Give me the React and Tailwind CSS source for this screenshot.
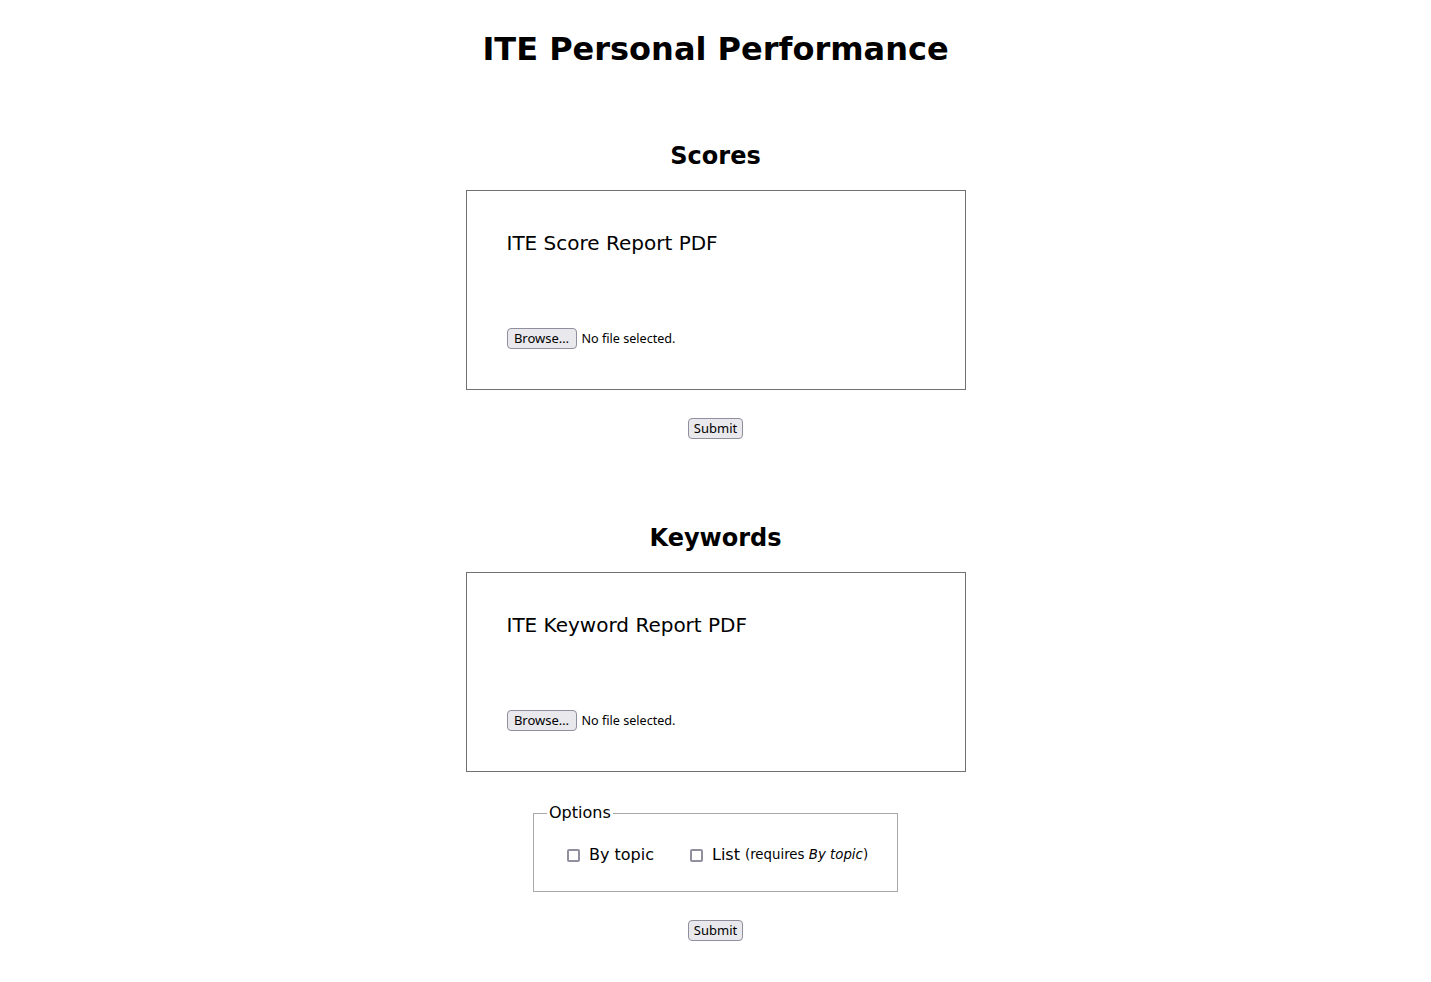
import * as React from "react";

function FileField() {
  return (
    <div className="flex items-center gap-[5px] font-['Noto_Sans',sans-serif] text-[13px] text-black">
      <button
        type="button"
        className="h-[21px] w-[70px] leading-[19px] bg-[#e9e9ed] border border-[#8f8f9d] rounded-[4px] text-center"
      >
        Browse…
      </button>
      <span className="text-[12.6px] leading-[21px]">No file selected.</span>
    </div>
  );
}

function UploadBox({ label }) {
  return (
    <div className="w-[500px] h-[200px] border border-[#707070] pl-[40px] pt-[40px]">
      <label className="block text-[20px] leading-[24px]">{label}</label>
      <div className="mt-[73px]">
        <FileField />
      </div>
    </div>
  );
}

function SubmitButton() {
  return (
    <button
      type="button"
      className="h-[21px] w-[55px] leading-[19px] bg-[#e9e9ed] border border-[#8f8f9d] rounded-[4px] font-['Noto_Sans',sans-serif] text-[13px] text-center"
    >
      Submit
    </button>
  );
}

function Checkbox({ children }) {
  return (
    <label className="flex items-center">
      <input
        type="checkbox"
        className="appearance-none w-[13px] h-[13px] border-2 border-[#8f8f9d] rounded-[2px] bg-white mr-[9px]"
      />
      {children}
    </label>
  );
}

export default function App() {
  return (
    <div className="min-h-screen bg-white text-black font-['DejaVu_Sans',sans-serif] flex flex-col items-center">
      <h1 className="mt-[30px] text-[32px] leading-[38px] font-bold">
        ITE Personal Performance
      </h1>

      <h2 className="mt-[73px] text-[24px] leading-[30px] font-bold">Scores</h2>
      <div className="mt-[19px] flex">
        <UploadBox label="ITE Score Report PDF" />
      </div>
      <div className="mt-[28px] flex">
        <SubmitButton />
      </div>

      <h2 className="mt-[84px] text-[24px] leading-[30px] font-bold">
        Keywords
      </h2>
      <div className="mt-[19px] flex">
        <UploadBox label="ITE Keyword Report PDF" />
      </div>

      <fieldset className="mt-[31px] w-[365px] h-[89px] border border-[#a8a8a8] px-[13px] pb-[10px]">
        <legend className="px-[2px] text-[16px] leading-[20px]">Options</legend>
        <div className="flex items-center gap-[36px] pl-[20px] mt-[22px] text-[16px] leading-[20px]">
          <Checkbox>By topic</Checkbox>
          <Checkbox>
            List
            <small className="ml-[5px] text-[13.33px]">
              (requires <em>By topic</em>)
            </small>
          </Checkbox>
        </div>
      </fieldset>

      <div className="mt-[28px] flex">
        <SubmitButton />
      </div>
    </div>
  );
}
